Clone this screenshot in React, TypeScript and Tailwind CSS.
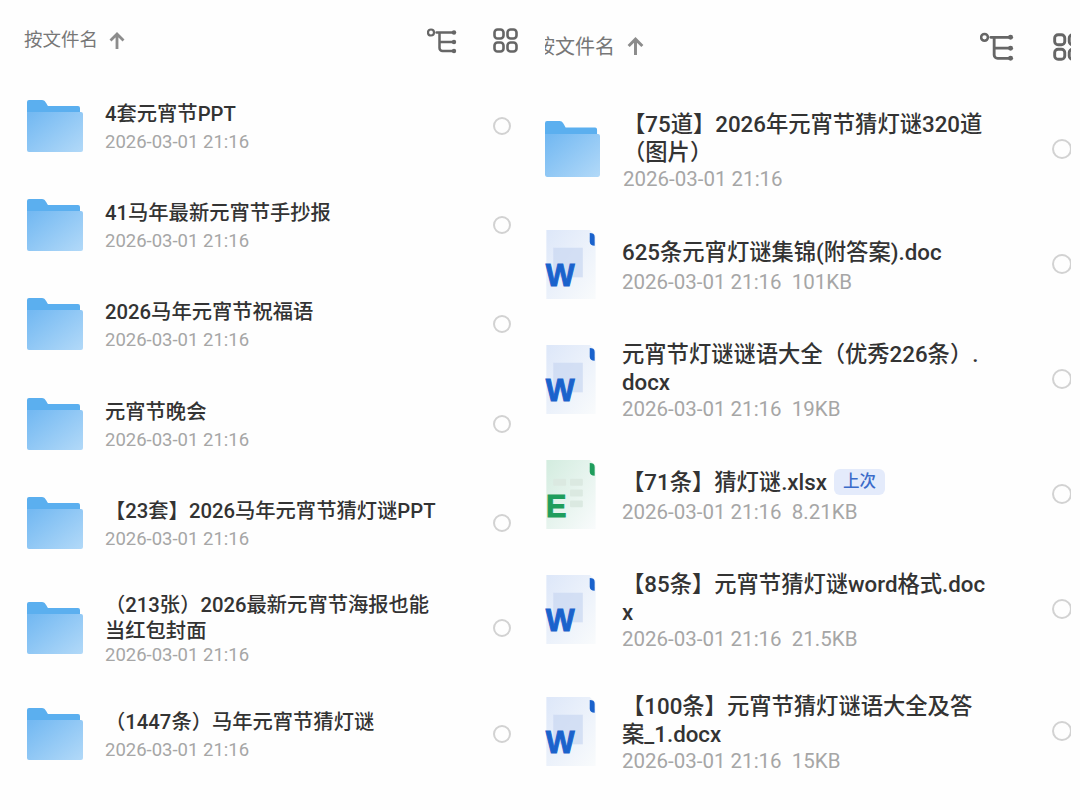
import { Fragment } from "react";

type Kind = "folder" | "word" | "excel";
type Row = { name: string; date: string; kind: Kind; h: number; size?: string; badge?: string };

const DATE = "2026-03-01 21:16";

const LEFT: Row[] = [
  { name: "4套元宵节PPT", date: DATE, kind: "folder", h: 99.4 },
  { name: "41马年最新元宵节手抄报", date: DATE, kind: "folder", h: 99.4 },
  { name: "2026马年元宵节祝福语", date: DATE, kind: "folder", h: 99.4 },
  { name: "元宵节晚会", date: DATE, kind: "folder", h: 99.4 },
  { name: "【23套】2026马年元宵节猜灯谜PPT", date: DATE, kind: "folder", h: 99.4 },
  { name: "（213张）2026最新元宵节海报也能\n当红包封面", date: DATE, kind: "folder", h: 111 },
  { name: "（1447条）马年元宵节猜灯谜", date: DATE, kind: "folder", h: 99.4 },
];

const RIGHT: Row[] = [
  { name: "【75道】2026年元宵节猜灯谜320道\n（图片）", date: DATE, kind: "folder", h: 115 },
  { name: "625条元宵灯谜集锦(附答案).doc", date: DATE, size: "101KB", kind: "word", h: 115 },
  { name: "元宵节灯谜谜语大全（优秀226条）.\ndocx", date: DATE, size: "19KB", kind: "word", h: 115 },
  { name: "【71条】猜灯谜.xlsx", date: DATE, size: "8.21KB", kind: "excel", h: 115, badge: "上次" },
  { name: "【85条】元宵节猜灯谜word格式.doc\nx", date: DATE, size: "21.5KB", kind: "word", h: 115 },
  { name: "【100条】元宵节猜灯谜语大全及答\n案_1.docx", date: DATE, size: "15KB", kind: "word", h: 129 },
];

function FolderIcon({ id, className }: { id: string; className: string }) {
  return (
    <svg viewBox="0 0 56 52" preserveAspectRatio="none" className={className}>
      <defs>
        <linearGradient id={id} x1="0" y1="0.1" x2="1" y2="1">
          <stop offset="0" stopColor="#74b9f2" />
          <stop offset="1" stopColor="#b2d9f8" />
        </linearGradient>
      </defs>
      <path d="M0 2a2 2 0 0 1 2-2h13c3 0 4 3 6 6h30a2 2 0 0 1 2 2v6H0z" fill="#5bafef" />
      <path d="M0 12h54a2 2 0 0 1 2 2v36a2 2 0 0 1-2 2H2a2 2 0 0 1-2-2z" fill={`url(#${id})`} />
    </svg>
  );
}

function DocIcon({ id, kind, className }: { id: string; kind: Kind; className: string }) {
  const word = kind === "word";
  const tint = word ? "#dde7f9" : "#d3ecdf";
  const main = word ? "#1a62cc" : "#1f9d5c";
  return (
    <svg viewBox="0 0 52 70" className={className}>
      <defs>
        <linearGradient id={id} x1="0" y1="0" x2="1" y2="1">
          <stop offset="0" stopColor={tint} />
          <stop offset="1" stopColor="#f9fbfc" />
        </linearGradient>
      </defs>
      <path d="M1 0h44l6 6v64H1z" fill={`url(#${id})`} />
      <path d="M45 3c3 0 5 1 5 4v9c-3 0-5-1-5-4z" fill={main} />
      {word ? (
        <rect x="8" y="18" width="30" height="30" fill="#c9d7f1" opacity="0.7" />
      ) : (
        <g fill="#dbe9e1">
          <rect x="8" y="19" width="13" height="7" rx="1" />
          <rect x="25" y="19" width="13" height="7" rx="1" />
          <rect x="25" y="30" width="13" height="7" rx="1" />
          <rect x="25" y="41" width="13" height="7" rx="1" />
        </g>
      )}
      <text
        x={word ? 15 : 11}
        y={word ? 57 : 58}
        textAnchor="middle"
        fontFamily="Liberation Sans, sans-serif"
        fontWeight="700"
        fontSize="31"
        fill={main}
        stroke={main}
        strokeWidth="1"
      >
        {word ? "W" : "E"}
      </text>
    </svg>
  );
}

function TreeIcon({ className }: { className: string }) {
  return (
    <svg viewBox="0 0 30 26" fill="none" stroke="#666" strokeWidth="2.5" strokeLinecap="round" className={className}>
      <circle cx="4" cy="4.5" r="3" strokeWidth="2.2" />
      <path d="M9.5 4.5H27M12.5 4.5v15.5a3 3 0 0 0 3 3H27M12.5 14H27" />
      <circle cx="27" cy="4.5" r="2.2" fill="#666" stroke="none" />
      <circle cx="27" cy="14" r="2.2" fill="#666" stroke="none" />
      <circle cx="27" cy="23" r="2.2" fill="#666" stroke="none" />
    </svg>
  );
}

function GridIcon({ className }: { className: string }) {
  return (
    <svg viewBox="0 0 25 25" fill="none" stroke="#666" strokeWidth="2.6" className={className}>
      <rect x="1.5" y="1.5" width="9" height="9" rx="3" />
      <rect x="14.5" y="1.5" width="9" height="9" rx="3" />
      <rect x="1.5" y="14.5" width="9" height="9" rx="3" />
      <rect x="14.5" y="14.5" width="9" height="9" rx="3" />
    </svg>
  );
}

function UpArrow({ className }: { className: string }) {
  return (
    <svg viewBox="0 0 16 18" fill="none" stroke="#8c8c8c" strokeWidth="2.8" className={className}>
      <path d="M8 17V2M1.5 8.5 8 2l6.5 6.5" />
    </svg>
  );
}

function Title({ text }: { text: string }) {
  return (
    <>
      {text.split("\n").map((line, i) => (
        <Fragment key={i}>
          {i > 0 && <br />}
          {line}
        </Fragment>
      ))}
    </>
  );
}

export default function App() {
  return (
    <div
      className="flex h-[810px] w-[1080px] overflow-hidden bg-[#fefefe]"
      style={{ fontFamily: 'Roboto, "Noto Sans CJK SC", sans-serif' }}
    >
      {/* left phone capture */}
      <div className="w-[545px] shrink-0">
        <div className="flex h-[76px] items-center pl-6 pr-[27px] pt-[5px] text-[18.5px] text-[#777]">
          <span>按文件名</span>
          <UpArrow className="ml-[11px] h-[18px] w-[16px]" />
          <TreeIcon className="ml-auto h-[26px] w-[30px]" />
          <GridIcon className="ml-[36px] h-[25px] w-[25px]" />
        </div>
        {LEFT.map((r, i) => (
          <div key={i} className="flex items-center pl-[27px] pr-[34px]" style={{ height: r.h }}>
            <FolderIcon id={`lf${i}`} className="h-[52px] w-[56px] shrink-0" />
            <div className="ml-[22px] min-w-0 flex-1 pt-[2px]">
              <div className="text-[20.3px] font-medium leading-[26px] text-[#333]">
                <Title text={r.name} />
              </div>
              <div className={`text-[18.5px] leading-[22px] text-[#a6a6a6] ${r.name.includes("\n") ? "" : "mt-[4px]"}`}>
                {r.date}
              </div>
            </div>
            <div className="h-[18px] w-[18px] shrink-0 rounded-full border-2 border-[#d2d2d2]" />
          </div>
        ))}
      </div>

      {/* right phone capture, cropped on both sides */}
      <div className="w-[526px] shrink-0 overflow-hidden">
        <div className="-ml-[10px] flex h-[91.5px] items-center pt-[2px] text-[20px] text-[#777]">
          <span className="shrink-0">按文件名</span>
          <UpArrow className="ml-[12px] h-[19px] w-[17px] shrink-0" />
          <TreeIcon className="ml-[336px] h-[30px] w-[34px] shrink-0" />
          <GridIcon className="ml-[39px] h-[28px] w-[28px] shrink-0" />
        </div>
        {RIGHT.map((r, i) => (
          <div key={i} className="flex items-center" style={{ height: r.h }}>
            {r.kind === "folder" ? (
              <FolderIcon id={`rf${i}`} className="h-[56px] w-[55px] shrink-0" />
            ) : (
              <DocIcon id={`rd${i}`} kind={r.kind} className="h-[69px] w-[52px] shrink-0" />
            )}
            <div className={`min-w-0 flex-1 pt-[4px] ${r.kind === "folder" ? "ml-[23px]" : "ml-[25px]"}`}>
              <div className="flex items-center text-[22.3px] font-medium leading-[28px] text-[#333]">
                <span>
                  <Title text={r.name} />
                </span>
                {r.badge && (
                  <span className="ml-[7px] rounded-[6px] bg-[#e4ebfb] px-[9px] text-[16.5px] leading-[26px] text-[#3b6bc9]">
                    {r.badge}
                  </span>
                )}
              </div>
              <div className={`whitespace-pre text-[20.5px] leading-[26px] text-[#a6a6a6] ${r.name.includes("\n") ? "" : "mt-[3px]"}`}>
                {r.date}
                {r.size ? `  ${r.size}` : ""}
              </div>
            </div>
            <div className="-mr-[1px] h-[20px] w-[20px] shrink-0 rounded-full border-2 border-[#d2d2d2]" />
          </div>
        ))}
      </div>
    </div>
  );
}
